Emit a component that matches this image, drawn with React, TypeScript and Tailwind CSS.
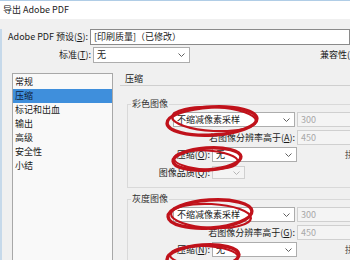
import React from 'react';

const Chevron = ({ dim }: { dim?: boolean }) => (
  <svg width="7" height="4" viewBox="0 0 7 4" className="shrink-0">
    <path d="M0.5 0.5 L3.5 3.5 L6.5 0.5" fill="none" stroke={dim ? '#b5b5b5' : '#606060'} strokeWidth="1" />
  </svg>
);

const Select = ({ value, width, disabled, tall = true }: { value: string; width: string; disabled?: boolean; tall?: boolean }) => (
  <div
    className={`flex ${tall ? 'h-[15px]' : 'h-[13px]'} ${width} shrink-0 items-center justify-between border pl-[3px] pr-[4px] ${
      disabled ? 'border-[#d0d0d0] bg-[#f4f4f4]' : 'border-[#adadad] bg-white'
    }`}
  >
    <span>{value}</span>
    <Chevron dim={disabled} />
  </div>
);

const Box = ({ value }: { value: string }) => (
  <div className="ml-[2px] flex h-[15px] w-[80px] shrink-0 items-center border border-[#d0d0d0] bg-[#f4f4f4] pl-[3px] text-[#a8a8a8]">
    {value}
  </div>
);

const Key = ({ k }: { k: string }) => (
  <>
    (<span className="underline">{k}</span>):
  </>
);

const items = ['常规', '压缩', '标记和出血', '输出', '高级', '安全性', '小结'];

const Group = ({ title, res, comp, quality }: { title: string; res: string; comp: string; quality?: boolean }) => (
  <fieldset className="ml-[7px] w-[260px] border border-[#d9d9d9] pb-[8px]">
    <legend className="ml-[3px] px-[1px] leading-[12px] text-[#333]">{title}</legend>
    <div className="mt-[2px] flex h-[15px] pl-[45px]">
      <Select value="不缩减像素采样" width="w-[122px]" />
      <Box value="300" />
    </div>
    <div className="mt-[3px] flex h-[15px]">
      <div className="flex w-[167px] items-center justify-end whitespace-nowrap">
        若图像分辨率高于<Key k={res} />
      </div>
      <Box value="450" />
    </div>
    <div className="mt-[2px] flex h-[15px] items-center">
      <div className="flex w-[82px] items-center justify-end whitespace-nowrap">
        压缩<Key k={comp} />
      </div>
      <div className="ml-[2px]">
        <Select value="无" width="w-[85px]" />
      </div>
      <span className="ml-[48px] whitespace-nowrap text-[#555]">拼</span>
    </div>
    {quality && (
      <div className="mt-[4px] flex h-[13px] items-center">
        <div className="flex w-[82px] items-center justify-end whitespace-nowrap">
          图像品质<Key k="Q" />
        </div>
        <div className="ml-[2px]">
          <Select value="" width="w-[33px]" disabled tall={false} />
        </div>
      </div>
    )}
  </fieldset>
);

export default function App() {
  return (
    <div className="relative h-[260px] w-[350px] overflow-hidden bg-[#f0f0f0] font-['Noto_Sans_CJK_SC','Noto_Sans',sans-serif] text-[9px] leading-[12px] text-[#1a1a1a]">
      <div className="flex h-[19px] items-center border-t border-[#b0cde6] bg-white pl-[3px] text-[#222]">导出 Adobe PDF</div>

      <div className="h-[241px] border-l-2 border-[#c6d9ea]">
        <div className="mt-[10px] flex h-[16px] items-center">
          <div className="w-[93px] whitespace-nowrap text-right">
            Adobe PDF 预设<Key k="S" />
          </div>
          <div className="ml-[2px] flex h-[16px] w-[260px] shrink-0 items-center border border-[#8a8a8a] bg-white pl-[3px]">
            [印刷质量]（已修改）
          </div>
        </div>
        <div className="mt-[2px] flex h-[16px] items-center">
          <div className="w-[93px] whitespace-nowrap text-right">
            标准<Key k="T" />
          </div>
          <div className="ml-[2px]">
            <Select value="无" width="w-[97px] !h-[16px]" />
          </div>
          <span className="ml-[130px] whitespace-nowrap">兼容性(</span>
        </div>

        <div className="mt-[10px] flex">
          <div className="ml-[10px] h-[200px] w-[101px] shrink-0 border border-[#a8a8a8] bg-[#f9f9f9] pt-[1px]">
            {items.map((it, i) => (
              <div
                key={it}
                className={`flex h-[14px] items-center pl-[2px] ${i === 1 ? 'bg-[#3f8fdc] text-[#10213a]' : ''}`}
              >
                {it}
              </div>
            ))}
          </div>

          <div className="ml-[7px] min-w-0 flex-1">
            <div className="flex h-[13px] items-center border-b border-[#cfcfcf] pl-[5px]">压缩</div>
            <div className="mt-[12px]">
              <Group title="彩色图像" res="A" comp="O" quality />
            </div>
            <div className="mt-[5px]">
              <Group title="灰度图像" res="G" comp="N" />
            </div>
          </div>
        </div>
      </div>

      <svg className="pointer-events-none absolute inset-0" width="350" height="260" viewBox="0 0 350 260">
        <g fill="none" stroke="#c0121b" strokeLinecap="round">
          <ellipse cx="212" cy="121" rx="45" ry="14" strokeWidth="3.4" transform="rotate(-3 212 121)" />
          <ellipse cx="214" cy="119" rx="42" ry="12" strokeWidth="2.2" transform="rotate(3 214 119)" />
          <ellipse cx="207" cy="159" rx="34" ry="11" strokeWidth="3.4" transform="rotate(-4 207 159)" />
          <ellipse cx="206" cy="160" rx="32" ry="9.5" strokeWidth="2" transform="rotate(3 206 160)" />
          <ellipse cx="210" cy="214" rx="42" ry="14" strokeWidth="3.4" transform="rotate(-4 210 214)" />
          <ellipse cx="211" cy="216" rx="40" ry="12" strokeWidth="2.2" transform="rotate(3 211 216)" />
          <ellipse cx="203" cy="257" rx="36" ry="12" strokeWidth="3.4" transform="rotate(-4 203 257)" />
          <ellipse cx="204" cy="256" rx="34" ry="10" strokeWidth="2" transform="rotate(2 204 256)" />
        </g>
      </svg>
    </div>
  );
}
